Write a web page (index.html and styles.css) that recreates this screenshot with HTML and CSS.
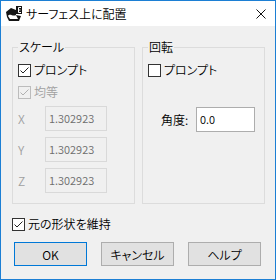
FILE: index.html
```html
<!DOCTYPE html>
<html lang="ja">
<head>
    <meta charset="UTF-8">
    <meta name="viewport" content="width=device-width, initial-scale=1.0">
    <title>サーフェス上に配置</title>
    <link rel="stylesheet" href="styles.css">
</head>
<body>
    <div class="window">
        <div class="titlebar">
            <svg class="app-icon" width="16" height="16" viewBox="0 0 16 16">
                <path d="M0 6 L5 2 L10 4 L10 9 L15 10 L13 15 L3 15 L1 11 Z" fill="#151515"/>
                <path d="M2 10 C4 7 7 11 10 9 L12 13 L4 13 Z" fill="#fff"/>
                <rect x="10" y="0" width="6" height="8" fill="#151515"/>
                <path d="M12.5 1.5 H15 M12.5 4 H14.5 M12.5 6.5 H15 M12.5 1.5 V6.5" stroke="#fff" fill="none"/>
            </svg>
            <span class="title">サーフェス上に配置</span>
            <svg class="close" width="10" height="10" viewBox="0 0 10 10">
                <path d="M0.5 0.5 L9.5 9.5 M9.5 0.5 L0.5 9.5" stroke="#111" stroke-width="1" fill="none"/>
            </svg>
        </div>

        <div class="content">
            <div class="groups">
                <fieldset class="group">
                    <legend>スケール</legend>
                    <div class="group-body">
                        <label class="check">
                            <span class="box"><svg viewBox="0 0 11 11"><polyline points="1.5,5.5 4,8 9.5,2.5"/></svg></span>
                            プロンプト
                        </label>
                        <label class="check disabled">
                            <span class="box"><svg viewBox="0 0 11 11"><polyline points="1.5,5.5 4,8 9.5,2.5"/></svg></span>
                            均等
                        </label>
                        <div class="field disabled">
                            <span class="axis">X</span>
                            <span class="input">1.302923</span>
                        </div>
                        <div class="field disabled">
                            <span class="axis">Y</span>
                            <span class="input">1.302923</span>
                        </div>
                        <div class="field disabled">
                            <span class="axis">Z</span>
                            <span class="input">1.302923</span>
                        </div>
                    </div>
                </fieldset>

                <fieldset class="group">
                    <legend>回転</legend>
                    <div class="group-body">
                        <label class="check">
                            <span class="box"></span>
                            プロンプト
                        </label>
                        <div class="field angle">
                            <span class="angle-label">角度:</span>
                            <span class="input">0.0</span>
                        </div>
                    </div>
                </fieldset>
            </div>

            <label class="check keep">
                <span class="box"><svg viewBox="0 0 11 11"><polyline points="1.5,5.5 4,8 9.5,2.5"/></svg></span>
                元の形状を維持
            </label>

            <div class="buttons">
                <button class="btn default">OK</button>
                <button class="btn">キャンセル</button>
                <button class="btn">ヘルプ</button>
            </div>
        </div>
    </div>
</body>
</html>
```

FILE: styles.css
```css
* {
    box-sizing: border-box;
}
body {
    margin: 0;
    font-family: "Noto Sans CJK JP", sans-serif;
    font-size: 12px;
    font-weight: 350;
    font-feature-settings: "palt";
    color: #000;
}
.window {
    width: 276px;
    height: 280px;
    border: 1px solid #1c7fd4;
    background: #f0f0f0;
}
.titlebar {
    height: 25px;
    background: #fff;
    display: flex;
    align-items: center;
    padding-left: 5px;
}
.app-icon {
    margin-right: 4px;
}
.title {
    flex: 1;
    line-height: 14px;
}
.close {
    margin-right: 9px;
}
.content {
    padding: 14px 10px 0 11px;
}
.groups {
    display: flex;
    gap: 7px;
}
.group {
    margin: 0;
    padding: 0 5px;
    width: 123px;
    height: 164px;
    border: 1px solid #dcdcdc;
    min-width: 0;
}
.group legend {
    padding: 0 1px;
    line-height: 14px;
}
.group-body {
    display: flex;
    flex-direction: column;
    gap: 6px;
    padding-top: 8px;
}
.check {
    display: flex;
    align-items: center;
    gap: 3px;
    height: 16px;
    line-height: 16px;
}
.box {
    width: 13px;
    height: 13px;
    border: 1px solid #333;
    background: #fff;
    display: inline-block;
}
.box svg {
    display: block;
    width: 11px;
    height: 11px;
    fill: none;
    stroke: #222;
    stroke-width: 1;
}
.check.disabled {
    color: #a0a0a0;
}
.check.disabled .box {
    border-color: #bcbcbc;
    background: #f0f0f0;
}
.check.disabled .box svg {
    stroke: #b0b0b0;
}
.field {
    display: flex;
    align-items: center;
    height: 25px;
}
.axis {
    width: 27px;
    color: #a0a0a0;
}
.input {
    width: 62px;
    height: 25px;
    padding: 3px 3px;
    line-height: 16px;
    border: 1px solid #d9d9d9;
    color: #6d6d6d;
    font-size: 11px;
}
.field.angle {
    margin-top: 23px;
    padding-left: 13px;
}
.angle-label {
    width: 35px;
}
.field.angle .input {
    width: 59px;
    background: #fff;
    border-color: #adadad;
    color: #000;
}
.keep {
    margin-top: 12px;
}
.buttons {
    display: flex;
    gap: 14px;
    margin-top: 10px;
    padding-left: 2px;
}
.btn {
    width: 73px;
    height: 24px;
    background: #e1e1e1;
    border: 1px solid #adadad;
    font-family: inherit;
    font-size: 12px;
    font-weight: inherit;
    font-feature-settings: "palt";
    padding: 0;
    color: #000;
}
.btn.default {
    border-color: #0078d7;
}
```
